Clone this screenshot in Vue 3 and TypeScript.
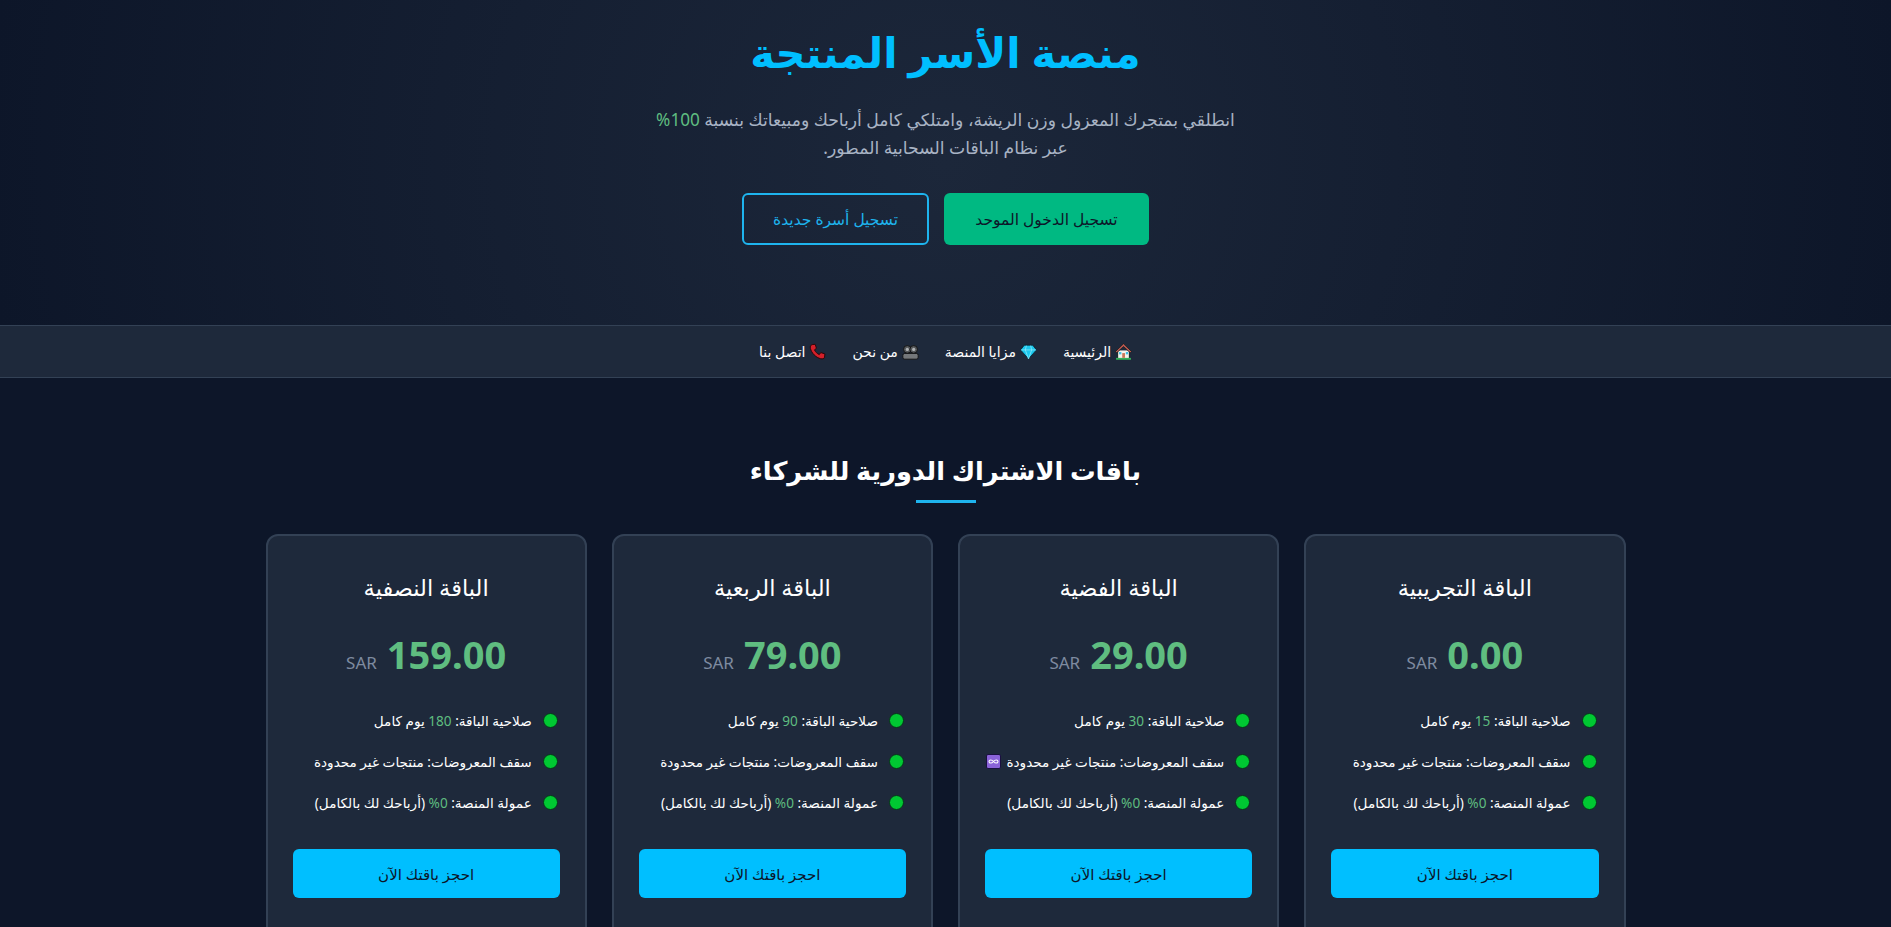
<script setup lang="ts">
interface Plan { name: string; price: string; days: string; infinite: boolean }
const plans: Plan[] = [
  { name: 'الباقة التجريبية', price: '0.00', days: '15', infinite: false },
  { name: 'الباقة الفضية', price: '29.00', days: '30', infinite: true },
  { name: 'الباقة الربعية', price: '79.00', days: '90', infinite: false },
  { name: 'الباقة النصفية', price: '159.00', days: '180', infinite: false },
]
const links = [
  { icon: 'home', label: 'الرئيسية' },
  { icon: 'gem', label: 'مزايا المنصة' },
  { icon: 'people', label: 'من نحن' },
  { icon: 'phone', label: 'اتصل بنا' },
]
</script>

<template>
  <div class="page" dir="rtl">
    <header class="hero">
      <h1>منصة الأسر المنتجة</h1>
      <p>انطلقي بمتجرك المعزول وزن الريشة، وامتلكي كامل أرباحك ومبيعاتك بنسبة <span class="g">100%</span> عبر نظام الباقات السحابية المطور.</p>
      <div class="actions">
        <a class="btn solid">تسجيل الدخول الموحد</a>
        <a class="btn outline">تسجيل أسرة جديدة</a>
      </div>
    </header>
    <nav class="nav">
      <a v-for="l in links" :key="l.icon" class="link">
        <svg v-if="l.icon === 'home'" viewBox="0 0 16 16" class="ico">
          <path d="M2.500 7V15H13.500V7" fill="#f7f3ea" stroke="#10201c" stroke-width=".9"/>
          <path d="M.5 8 8 .8 15.500 8l-1.200 1.100L8 3.200 1.700 9.100z" fill="#d9605a" stroke="#10201c" stroke-width=".8"/>
          <rect x="1" y="14" width="14" height="1.800" fill="#35b15a"/>
          <rect x="6.800" y="9.500" width="2.600" height="4.500" fill="#c9785a"/>
          <rect x="3.800" y="8.500" width="2.200" height="2.200" fill="#3fc0e6"/>
          <rect x="10.200" y="8.500" width="2.200" height="2.200" fill="#3fc0e6"/>
        </svg>
        <svg v-else-if="l.icon === 'gem'" viewBox="0 0 16 16" class="ico">
          <path d="M4 2h8l3.500 4.500L8 15 .5 6.500z" fill="#1cc8ee" stroke="#0a2430" stroke-width=".8" stroke-linejoin="round"/>
          <path d="M1 6.500h14M5 6.500 8 15l3-8.500M5 6.500 6 2.500M11 6.500l-1-4" fill="none" stroke="#8fe9fb" stroke-width=".7"/>
        </svg>
        <svg v-else-if="l.icon === 'people'" viewBox="0 0 16 16" class="ico">
          <rect x=".8" y="9.800" width="14.400" height="5.400" rx="1.800" fill="#74777a" stroke="#0c0c0c" stroke-width=".8"/>
          <circle cx="5" cy="6" r="3.600" fill="#55585b" stroke="#0c0c0c" stroke-width=".8"/>
          <circle cx="11" cy="6" r="3.600" fill="#55585b" stroke="#0c0c0c" stroke-width=".8"/>
          <circle cx="5" cy="6" r="1.500" fill="#b0b3b5"/>
          <circle cx="11" cy="6" r="1.500" fill="#b0b3b5"/>
        </svg>
        <svg v-else viewBox="0 0 16 16" class="ico">
          <path d="M3 1.500 5.800 1.200 7 5 5.200 6.400C6 8.500 7.600 10 9.700 10.900L11.100 9 15 10.300 14.600 13.400C14.300 14.800 12.800 15.200 11 14.800 6.500 13.700 2.300 9.500 1.300 5 .9 3.200 1.500 1.900 3 1.500z" fill="#d4202a" stroke="#2a0508" stroke-width=".9" stroke-linejoin="round"/>
        </svg>
        <span>{{ l.label }}</span>
      </a>
    </nav>
    <main class="main">
      <h2>باقات الاشتراك الدورية للشركاء</h2>
      <div class="rule"></div>
      <div class="grid">
        <article v-for="p in plans" :key="p.name" class="card">
          <h3>{{ p.name }}</h3>
          <div class="price"><b>{{ p.price }}</b><span>SAR</span></div>
          <ul>
            <li><i class="dot"></i><span>صلاحية الباقة: <em>{{ p.days }}</em> يوم كامل</span></li>
            <li>
              <i class="dot"></i>
              <span>سقف المعروضات: منتجات غير محدودة</span>
              <svg v-if="p.infinite" viewBox="0 0 15 15" class="inf">
                <rect x=".5" y=".5" width="14" height="14" rx="1.500" fill="#8a63d8" stroke="#1a1040"/>
                <path d="M7.500 7.500C6 5.500 3 5.500 3 7.500s3 2 4.500 0 4.500-2 4.500 0-3 2-4.500 0z" fill="none" stroke="#fff" stroke-width="1.100"/>
              </svg>
            </li>
            <li><i class="dot"></i><span>عمولة المنصة: <em>0%</em> (أرباحك لك بالكامل)</span></li>
          </ul>
          <a class="cta">احجز باقتك الآن</a>
        </article>
      </div>
    </main>
  </div>
</template>

<style>
html, body { margin: 0; background: #0d1629; }
</style>

<style scoped>
.page { font-family: "Noto Sans", "DejaVu Sans", sans-serif; color: #fff; height: 927px; overflow: hidden; background: #0d1629; }
.hero { height: 325px; box-sizing: border-box; padding-top: 20px; text-align: center; background: radial-gradient(circle at center, #1c273a 0%, #0d1629 100%); }
h1 { margin: 0; font-size: 41.7px; line-height: 64px; color: #00bfff; font-weight: 700; }
.hero p { margin: 22px auto 0; max-width: 600px; font-size: 17.2px; line-height: 28px; color: #a8b3c4; }
.g { color: #5fbd80; }
.actions { display: flex; justify-content: center; gap: 15px; margin-top: 31px; }
.btn { height: 52px; box-sizing: border-box; display: flex; align-items: center; justify-content: center; border-radius: 6px; font-size: 15.5px; }
.solid { width: 205px; background: #00b982; color: #0d1629; }
.outline { width: 187px; border: 2px solid #1eb4ee; color: #1eb4ee; }
.nav { height: 53px; box-sizing: border-box; background: #1e293b; border-top: 1px solid #334155; border-bottom: 1px solid #334155; display: flex; justify-content: center; align-items: center; gap: 26px; font-size: 14px; }
.link { display: flex; align-items: center; gap: 4px; }
.ico { width: 17px; height: 17px; flex: none; }
.main { width: 1360px; margin: 0 auto; }
h2 { margin: 71px 0 0; text-align: center; font-size: 25.6px; line-height: 44px; font-weight: 700; }
.rule { width: 60px; height: 3px; background: #1eb4ee; margin: 7px auto 31px; }
.grid { display: grid; grid-template-columns: repeat(4, 1fr); gap: 25px; }
.card { background: #1e293b; border: 2px solid #334155; border-radius: 12px; padding: 25px; height: 420px; box-sizing: border-box; }
h3 { margin: 0; font-size: 22.5px; line-height: 54px; text-align: center; font-weight: 500; }
.price { display: flex; justify-content: center; align-items: baseline; gap: 10px; margin-top: 13px; height: 50px; }
.price b { font-size: 38px; color: #5fbd80; }
.price span { font-size: 17px; color: #7e8ba0; }
ul { list-style: none; margin: 22px 0 0; padding: 0; }
li { display: flex; align-items: center; gap: 11px; font-size: 13.6px; height: 41px; padding: 0 2px 0 0; white-space: nowrap; }
.dot { width: 15px; height: 15px; box-sizing: border-box; flex: none; border-radius: 50%; background: #00c832; border: 1px solid #06361a; }
.inf { width: 15px; height: 15px; flex: none; margin-right: -6px; }
em { font-style: normal; color: #5fbd80; }
.cta { display: flex; align-items: center; justify-content: center; height: 49px; background: #00bfff; border-radius: 6px; color: #0d1629; font-size: 15px; margin-top: 26px; }
</style>
